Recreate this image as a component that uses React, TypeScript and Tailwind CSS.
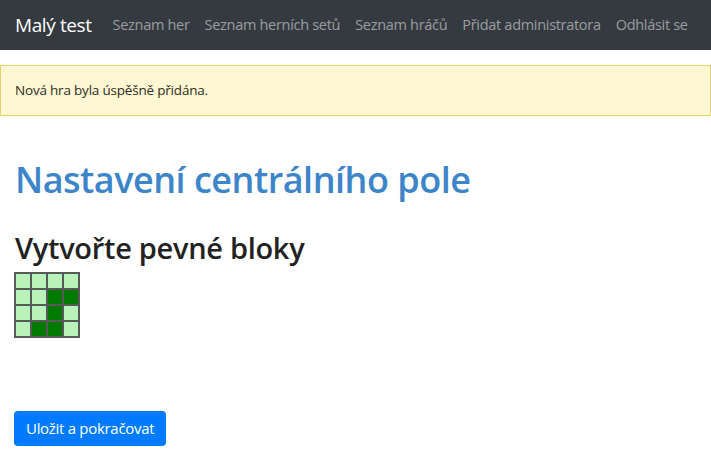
const navLinks = ['Seznam her', 'Seznam herních setů', 'Seznam hráčů', 'Přidat administratora', 'Odhlásit se'];

// 1 = pevný blok
const grid = [
  [0, 0, 0, 0],
  [0, 0, 1, 1],
  [0, 0, 1, 0],
  [0, 1, 1, 0],
];

export default function App() {
  return (
    <div className="min-h-screen bg-white font-['Open_Sans',sans-serif] text-[#212529]">
      {/* Navbar */}
      <nav className="flex h-[50px] items-center bg-[#343a40] px-[15px]">
        <a href="#" className="mr-[21px] text-[19px] text-white tracking-[-0.4px]">Malý test</a>
        <div className="flex items-center gap-[15px]">
          {navLinks.map((l) => (
            <a key={l} href="#" className="text-[14.5px] tracking-[-0.3px] text-white/50">
              {l}
            </a>
          ))}
        </div>
      </nav>

      {/* Alert */}
      <div className="mt-[15px] flex h-[51px] items-center border border-[#e3d46e] bg-[#fff7d4] px-[14px] text-[13.5px] tracking-[-0.2px] text-[#2d2d1a]">
        Nová hra byla úspěšně přidána.
      </div>

      <div className="px-[15px]">
        <h1 className="mt-[42px] text-[36px] font-semibold leading-[1.2] tracking-[-0.5px] text-[#3d85c9]">Nastavení centrálního pole</h1>
        <h2 className="mt-[30px] text-[29px] font-semibold leading-[1.2] tracking-[-0.3px] text-[#222]">Vytvořte pevné bloky</h2>

        <div className="ml-[-1px] mt-[6px] inline-grid grid-cols-4 gap-[2px] bg-[#5a5a5a] p-[2px]">
          {grid.flat().map((v, i) => (
            <div key={i} className={`h-[14px] w-[14px] ${v ? 'bg-[#007a00]' : 'bg-[#b8f4b8]'}`} />
          ))}
        </div>

        <div className="mt-[73px]">
          <button className="ml-[-1px] h-[35px] rounded-[4px] bg-[#007bff] px-[12px] text-[15px] tracking-[-0.3px] text-white">
            Uložit a pokračovat
          </button>
        </div>
      </div>
    </div>
  );
}
